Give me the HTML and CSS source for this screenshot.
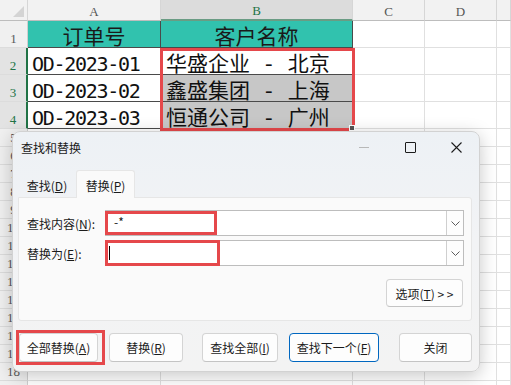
FILE: index.html
```html
<!doctype html>
<html>
<head>
  <meta charset="utf-8">
  <title>查找和替换</title>
  <link rel="stylesheet" href="styles.css">
</head>
<body>
  <div class="sheet">
    <div class="row head">
      <span class="corner"></span>
      <span>A</span><span class="sel">B</span><span>C</span><span>D</span><span></span>
    </div>
    <div class="row r1">
      <span class="num">1</span>
      <span class="cell title">订单号</span>
      <span class="cell title">客户名称</span>
      <span></span><span></span><span></span>
    </div>
    <div class="row data">
      <span class="num on">2</span>
      <span class="cell code">OD-2023-01</span>
      <span class="cell name">华盛企业 - 北京</span>
      <span></span><span></span><span></span>
    </div>
    <div class="row data">
      <span class="num on">3</span>
      <span class="cell code">OD-2023-02</span>
      <span class="cell name picked">鑫盛集团 - 上海</span>
      <span></span><span></span><span></span>
    </div>
    <div class="row data">
      <span class="num on">4</span>
      <span class="cell code">OD-2023-03</span>
      <span class="cell name picked">恒通公司 - 广州</span>
      <span></span><span></span><span></span>
    </div>
    <div class="row"><span class="num">5</span><span></span><span></span><span></span><span></span><span></span></div>
    <div class="row"><span class="num">6</span><span></span><span></span><span></span><span></span><span></span></div>
    <div class="row"><span class="num">7</span><span></span><span></span><span></span><span></span><span></span></div>
    <div class="row"><span class="num">8</span><span></span><span></span><span></span><span></span><span></span></div>
    <div class="row"><span class="num">9</span><span></span><span></span><span></span><span></span><span></span></div>
    <div class="row"><span class="num">10</span><span></span><span></span><span></span><span></span><span></span></div>
    <div class="row"><span class="num">11</span><span></span><span></span><span></span><span></span><span></span></div>
    <div class="row"><span class="num">12</span><span></span><span></span><span></span><span></span><span></span></div>
    <div class="row"><span class="num">13</span><span></span><span></span><span></span><span></span><span></span></div>
    <div class="row"><span class="num">14</span><span></span><span></span><span></span><span></span><span></span></div>
    <div class="row"><span class="num">15</span><span></span><span></span><span></span><span></span><span></span></div>
    <div class="row"><span class="num">16</span><span></span><span></span><span></span><span></span><span></span></div>
    <div class="row"><span class="num">17</span><span></span><span></span><span></span><span></span><span></span></div>
    <div class="row"><span class="num">18</span><span></span><span></span><span></span><span></span><span></span></div>
    <div class="row"><span class="num"></span><span></span><span></span><span></span><span></span><span></span></div>
  </div>

  <!-- selection B2:B4 -->
  <div class="range"><span class="handle"></span></div>

  <div class="dialog">
    <div class="titlebar">
      <span class="caption">查找和替换</span>
      <span class="ctl"><span class="min"></span></span>
      <span class="ctl"><span class="max"></span></span>
      <span class="ctl">
        <svg width="11" height="11" viewBox="0 0 11 11"><path d="M0.5 0.5L10.5 10.5M10.5 0.5L0.5 10.5" stroke="#1b1b1b" stroke-width="1.1" fill="none"/></svg>
      </span>
    </div>
    <div class="tabs">
      <span class="tab">查找(<u>D</u>)</span>
      <span class="tab active">替换(<u>P</u>)</span>
    </div>
    <div class="panel">
      <div class="field">
        <label>查找内容(<u>N</u>):</label>
        <div class="combo">
          <span class="hl find">-*</span>
          <span class="drop"><svg width="9" height="5" viewBox="0 0 9 5"><path d="M0.5 0.5L4.5 4.5L8.5 0.5" stroke="#5c5c5c" fill="none"/></svg></span>
        </div>
      </div>
      <div class="field">
        <label>替换为(<u>E</u>):</label>
        <div class="combo">
          <span class="hl repl"><span class="caret"></span></span>
          <span class="drop"><svg width="9" height="5" viewBox="0 0 9 5"><path d="M0.5 0.5L4.5 4.5L8.5 0.5" stroke="#5c5c5c" fill="none"/></svg></span>
        </div>
      </div>
      <div class="more">
        <button class="btn opts">选项(<u>T</u>) &gt; &gt;</button>
      </div>
    </div>
    <div class="actions">
      <span class="mark"><button class="btn all">全部替换(<u>A</u>)</button></span>
      <button class="btn one">替换(<u>R</u>)</button>
      <button class="btn findall">查找全部(<u>I</u>)</button>
      <button class="btn next">查找下一个(<u>F</u>)</button>
      <button class="btn close">关闭</button>
    </div>
  </div>
</body>
</html>
```

FILE: styles.css
```css
body {
  margin: 0;
  background: white;
  font-family: "Noto Sans CJK SC", sans-serif;
  overflow: hidden;
  --red: #e5484b;
  --teal: #31c2ae;
  --green: #217346;
}

/* spreadsheet */

.sheet {
  display: flex;
  flex-direction: column;
}

.row {
  display: grid;
  grid-template-columns: 28px 133px 192px 72px 72px 1fr;
  height: 18px;
}

.row > span {
  box-sizing: border-box;
  border-right: 1px solid #e0e0e0;
  border-bottom: 1px solid #e0e0e0;
}

.row.head {
  height: 21px;
}

.row.r1,
.row.data {
  height: 27px;
}

.head > span {
  display: flex;
  align-items: flex-end;
  justify-content: center;
  padding-bottom: 2px;
  background: #f2f2f2;
  border-right-color: #d6d6d6;
  border-bottom-color: #bdbdbd;
  color: #555;
  font-family: "Liberation Serif", serif;
  font-size: 13px;
  line-height: 1;
}

.head > .sel {
  background: #dcdcdc;
  border-bottom: 2px solid #6a9c84;
  color: var(--green);
}

.head > .corner {
  position: relative;
}

.head > .corner::after {
  content: "";
  position: absolute;
  right: 3px;
  bottom: 3px;
  border-left: 11px solid transparent;
  border-bottom: 11px solid #d4d4d4;
}

.row > .num {
  display: flex;
  align-items: flex-end;
  justify-content: center;
  padding-bottom: 2px;
  background: #f0f0f0;
  border-right-color: #cfcfcf;
  border-bottom-color: #dcdcdc;
  color: #5a5a5a;
  font-family: "Liberation Serif", serif;
  font-size: 13px;
  line-height: 1;
}

.row > .num.on {
  background: #e3e3e3;
  color: var(--green);
  border-right: 2px solid var(--green);
}

.row > .cell {
  display: flex;
  align-items: center;
  border-right-color: #4a4a4a;
  border-bottom-color: #4a4a4a;
  color: #111;
  line-height: 1;
  white-space: pre;
}

.cell.title {
  justify-content: center;
  padding-top: 2px;
  background: var(--teal);
  font-size: 21px;
  color: #1a1a1a;
}

.cell.code {
  padding: 6px 0 0 4px;
  font-family: "DejaVu Sans Mono", monospace;
  font-size: 20px;
  line-height: 20px;
  letter-spacing: -1.3px;
}

.cell.name {
  padding: 9px 0 0 5px;
  font-family: "Liberation Mono", "Noto Sans CJK SC", monospace;
  font-size: 21px;
  line-height: 17px;
}

.cell.picked {
  background: #c7c7c7;
}

.range {
  position: absolute;
  left: 160px;
  top: 48px;
  width: 195px;
  height: 83px;
  box-sizing: border-box;
  border: 3px solid var(--red);
}

.handle {
  position: absolute;
  right: -3px;
  bottom: -3px;
  width: 4px;
  height: 4px;
  background: #555;
  border: 1px solid white;
}

/* dialog */

.dialog {
  position: absolute;
  left: 12px;
  top: 131px;
  width: 468px;
  height: 241px;
  box-sizing: border-box;
  padding: 0 7px 0 5px;
  background: linear-gradient(#edf1f5, #f2f3f5 45%, #f3f3f3);
  border: 1px solid #d2d2d2;
  border-radius: 8px;
  box-shadow: 0 4px 18px rgba(0, 0, 0, 0.22);
  font-size: 12px;
  color: #1b1b1b;
}

.titlebar {
  display: flex;
  align-items: center;
  height: 29px;
  margin: 0 -7px 0 -5px;
}

.caption {
  flex-grow: 1;
  padding-left: 8px;
  padding-top: 1px;
}

.ctl {
  display: flex;
  align-items: center;
  justify-content: center;
  width: 46px;
  height: 29px;
  padding-top: 1px;
}

.min {
  width: 10px;
  height: 1px;
  background: #b8b8b8;
}

.max {
  width: 9px;
  height: 9px;
  border: 1px solid #1b1b1b;
  border-radius: 1px;
}

.tabs {
  display: flex;
  margin-top: 9px;
  height: 27px;
}

.tab {
  display: flex;
  align-items: center;
  justify-content: center;
  width: 58px;
  padding-top: 4px;
  box-sizing: border-box;
}

.tab.active {
  width: 59px;
  padding-top: 1px;
  background: #fafafa;
  border: 1px solid #e6e6e6;
  border-bottom: none;
  border-radius: 3px 3px 0 0;
  position: relative;
  z-index: 1;
  height: 28px;
}

.panel {
  height: 124px;
  box-sizing: border-box;
  padding: 12px 7px 0 8px;
  background: #fafafa;
  border: 1px solid #e6e6e6;
  border-radius: 0 3px 3px 3px;
}

.field {
  display: flex;
  align-items: center;
  height: 26px;
}

.field + .field {
  margin-top: 4px;
}

.field label {
  width: 78px;
  flex-shrink: 0;
}

.combo {
  display: flex;
  flex-grow: 1;
  height: 100%;
  box-sizing: border-box;
  background: white;
  border: 1px solid #bdbdbd;
}

.hl {
  display: flex;
  align-items: center;
  box-sizing: border-box;
  height: calc(100% + 2px);
  margin: -1px auto -1px -1px;
  border: 3px solid var(--red);
  background: white;
}

.hl.find {
  width: 112px;
  height: 24px;
  margin-top: 0;
  padding: 0 0 3px 6px;
}

.hl.repl {
  width: 115px;
  padding-left: 1px;
}

.caret {
  width: 1px;
  height: 14px;
  background: black;
}

.drop {
  display: flex;
  align-items: center;
  justify-content: center;
  width: 16px;
  border-left: 1px solid #cfcfcf;
  background: #fdfdfd;
}

.more {
  display: flex;
  justify-content: flex-end;
  margin-top: 13px;
  padding-right: 1px;
}

.btn {
  height: 29px;
  padding: 0;
  box-sizing: border-box;
  background: #fdfdfd;
  border: 1px solid #d4d4d4;
  border-bottom-color: #c4c4c4;
  border-radius: 4px;
  font-family: "Noto Sans CJK SC", sans-serif;
  font-size: 12px;
  color: #1b1b1b;
}

.btn.opts {
  width: 77px;
  height: 28px;
}

.actions {
  display: flex;
  margin-top: 12px;
}

.mark {
  display: flex;
  width: 83px;
  margin-left: 1px;
  outline: 3px solid var(--red);
}

.btn.all {
  width: 79px;
}

.btn.one {
  width: 74px;
  margin-left: 7px;
}

.btn.findall {
  width: 76px;
  margin-left: 19px;
}

.btn.next {
  width: 90px;
  margin-left: 11px;
  border: 1px solid #0067c0;
}

.btn.close {
  width: 73px;
  margin-left: 20px;
}
```
